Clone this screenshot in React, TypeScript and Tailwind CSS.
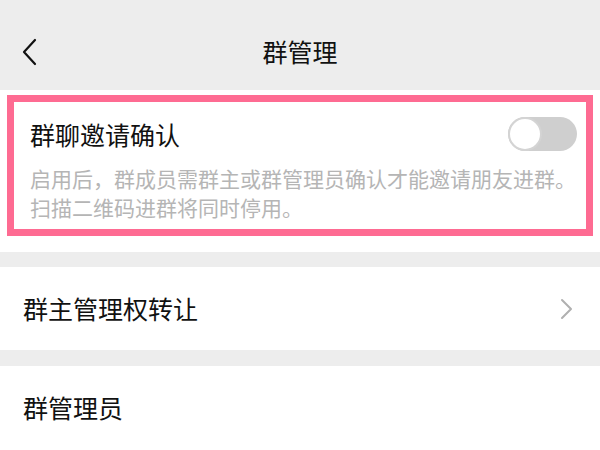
const FONT = { fontFamily: '"Noto Sans CJK SC", "Noto Sans", sans-serif' }

function BackIcon() {
  return (
    <svg width="16" height="28" viewBox="0 0 16 28" fill="none">
      <path d="M13 2 L2 14 L13 26" stroke="#111" strokeWidth="2.2" strokeLinecap="round" strokeLinejoin="round" />
    </svg>
  )
}

function ChevronRight() {
  return (
    <svg width="14" height="22" viewBox="0 0 14 22" fill="none">
      <path d="M2 2 L11 11 L2 20" stroke="#b0b0b0" strokeWidth="2" strokeLinecap="round" strokeLinejoin="round" />
    </svg>
  )
}

function Toggle() {
  return (
    <div className="flex h-[34px] w-[69px] items-center rounded-full bg-[#cfcfcf]">
      <div className="h-[34px] w-[34px] rounded-full border-2 border-[#d4d4d4] bg-white" />
    </div>
  )
}

export default function App() {
  return (
    <div className="flex h-[450px] w-[600px] flex-col overflow-hidden bg-white" style={FONT}>
      <header className="grid h-[90px] shrink-0 grid-cols-[80px_1fr_80px] items-center bg-[#ededed] pt-[14px]">
        <div className="pl-[22px]">
          <BackIcon />
        </div>
        <h1 className="text-center text-[25px] font-normal text-[#111]">群管理</h1>
        <div />
      </header>

      <div className="bg-white px-[7px] pt-[5px] pb-[16px]">
        <div className="h-[141px] border-[7px] border-[#fe6b92] pl-[16px] pr-[9px] pt-[12px]">
          <div className="flex items-center justify-between">
            <span className="text-[25px] leading-[40px] text-[#111]">群聊邀请确认</span>
            <Toggle />
          </div>
          <p className="mt-[10px] text-[21px] leading-[29px] text-[#b5b5b5]">
            启用后，群成员需群主或群管理员确认才能邀请朋友进群。
            <br />
            扫描二维码进群将同时停用。
          </p>
        </div>
      </div>

      <div className="h-[15px] shrink-0 bg-[#ededed]" />

      <div className="flex h-[83px] shrink-0 items-center justify-between bg-white pl-[23px] pr-[26px]">
        <span className="text-[25px] text-[#111]">群主管理权转让</span>
        <ChevronRight />
      </div>

      <div className="h-[16px] shrink-0 bg-[#ededed]" />

      <div className="flex h-[84px] shrink-0 items-center bg-white pl-[23px]">
        <span className="text-[25px] text-[#111]">群管理员</span>
      </div>
    </div>
  )
}
